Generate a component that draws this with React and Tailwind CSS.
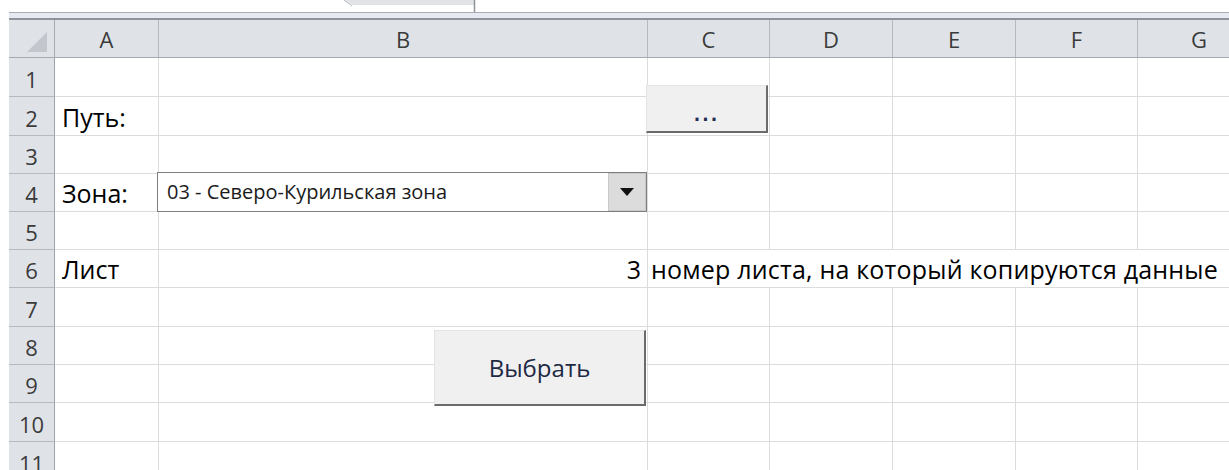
import React from 'react';

const cols = [
  { name: 'A', w: 'w-[104px]' },
  { name: 'B', w: 'w-[489px]' },
  { name: 'C', w: 'w-[122px]' },
  { name: 'D', w: 'w-[123px]' },
  { name: 'E', w: 'w-[123px]' },
  { name: 'F', w: 'w-[122px]' },
  { name: 'G', w: 'w-[123px]' },
];

const rowHeights = [
  'h-[39px]', 'h-[39px]', 'h-[38px]', 'h-[38px]', 'h-[38px]', 'h-[38px]',
  'h-[39px]', 'h-[38px]', 'h-[38px]', 'h-[39px]', 'h-[39px]',
];

const labels = { 2: 'Путь:', 4: 'Зона:', 6: 'Лист' };

function Cell({ row, col }) {
  // row 6: the note in C spills over D..G, so those gridlines are hidden
  const spill = row === 6 && ['C', 'D', 'E', 'F'].includes(col.name);
  const border = spill ? 'border-b border-[#dadcdd]' : 'border-r border-b border-[#dadcdd]';

  let content = null;
  if (col.name === 'A' && labels[row]) content = <span className="pl-[7px]">{labels[row]}</span>;
  if (row === 6 && col.name === 'B') content = <span className="ml-auto pr-[6px]">3</span>;
  if (row === 6 && col.name === 'C')
    content = <span className="pl-[3px] whitespace-nowrap tracking-[0.2px]">номер листа, на который копируются данные</span>;

  return (
    <div className={`${col.w} shrink-0 h-full flex items-end pb-[5px] leading-none ${border}`}>
      {content}
    </div>
  );
}

export default function App() {
  return (
    <div className="relative w-[1229px] h-[470px] overflow-hidden bg-white font-['Open_Sans',sans-serif] text-[25px] text-black">
      {/* strip above the column headers */}
      <div className="pl-[9px]">
        <div className="h-[12px]" />
        <div className="h-[1px] bg-[#a9adb2]" />
        <div className="h-[5px] bg-[#e6e9f1]" />
        <div className="h-[2px] bg-[#8e9399]" />
      </div>
      <svg className="absolute left-[330px] top-0" width="160" height="13" viewBox="0 0 160 13">
        <polygon points="14,0 22,5 144,5 144,0" fill="#e1e3e7" />
        <line x1="14" y1="0" x2="22" y2="6" stroke="#b9bcc1" strokeWidth="1" />
        <line x1="144.5" y1="0" x2="144.5" y2="12" stroke="#8e9399" strokeWidth="1.5" />
      </svg>

      <div className="pl-[9px]">
        {/* column headers */}
        <div className="flex h-[38px] bg-[#dfe3e8] border-b border-[#a5aab1] text-[#3b3b3b] text-[22px]">
          <div className="w-[46px] shrink-0 h-full border-r border-[#a5aab1] relative">
            <svg className="absolute left-[18px] top-[12px]" width="21" height="21" viewBox="0 0 21 21">
              <polygon points="0,20 20,20 20,0" fill="#c3c7cd" />
            </svg>
          </div>
          {cols.map(c => (
            <div key={c.name} className={`${c.w} shrink-0 h-full border-r border-[#b5bac0] flex items-center justify-center pt-[2px]`}>
              {c.name}
            </div>
          ))}
        </div>

        {/* rows */}
        {rowHeights.map((h, i) => {
          const row = i + 1;
          return (
            <div key={row} className={`flex ${h}`}>
              <div className="w-[46px] shrink-0 h-full bg-[#dfe3e8] border-r border-b border-r-[#9ea3aa] border-b-[#b5bac0] flex items-end justify-center pb-[6px] leading-none text-[22px] text-[#3b3b3b]">
                {row}
              </div>
              {cols.map(c => (
                <Cell key={c.name} row={row} col={c} />
              ))}
            </div>
          );
        })}
      </div>

      {/* "..." browse button */}
      <button className="absolute left-[646px] top-[85px] w-[122px] h-[48px] bg-[#f0f0f0] border-t border-l border-[#e4e4e4] border-r-2 border-b-2 border-r-[#6b6b6b] border-b-[#6b6b6b] flex items-center justify-center pt-[14px] font-['DejaVu_Sans',sans-serif] font-bold text-[17px] tracking-[2px] text-[#1f2d52]">
        ...
      </button>

      {/* zone combobox */}
      <div className="absolute left-[157px] top-[172px] w-[490px] h-[40px] bg-white border border-[#7d7d7d] flex items-center">
        <span className="pl-[9px] text-[20px] text-[#1a1a1a] flex-1 whitespace-nowrap">
          03 - Северо-Курильская зона
        </span>
        <div className="w-[38px] h-[38px] bg-[#dcdcdc] border border-[#c9c9c9] flex items-center justify-center">
          <svg width="14" height="8" viewBox="0 0 14 8">
            <polygon points="0,0 14,0 7,8" fill="#111" />
          </svg>
        </div>
      </div>

      {/* pick button */}
      <button className="absolute left-[434px] top-[330px] w-[212px] h-[76px] bg-[#f0f0f0] border-t border-l border-[#e4e4e4] border-r-2 border-b-2 border-r-[#6b6b6b] border-b-[#6b6b6b] flex items-center justify-center text-[24px] text-[#1e2a44]">
        Выбрать
      </button>
    </div>
  );
}
